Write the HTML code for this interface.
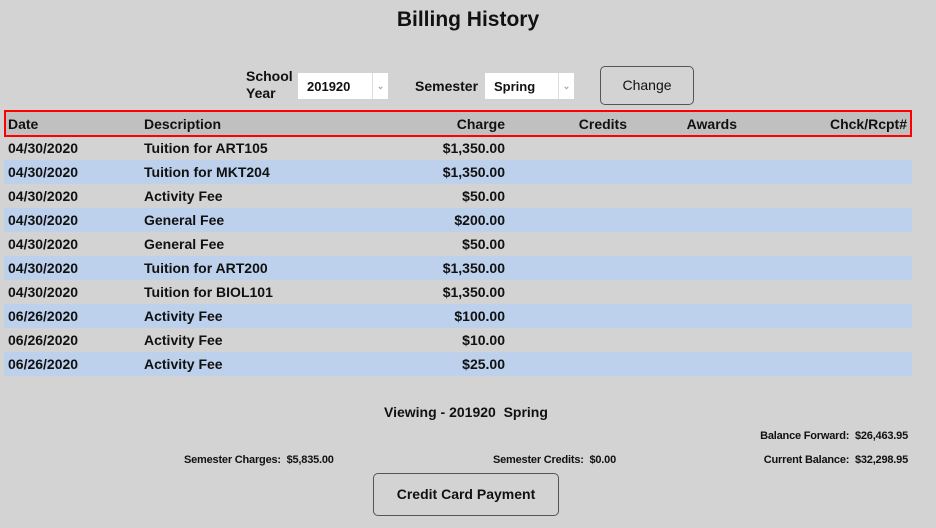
<!DOCTYPE html>
<html><head><style>
body{margin:0;width:936px;height:528px;background:#d3d3d3;font-family:"Liberation Sans",sans-serif;font-weight:bold;color:#111;position:relative;overflow:hidden}
.a{position:absolute;white-space:nowrap}
h1{position:absolute;top:8px;left:0;width:936px;text-align:center;margin:0;font-size:21px;font-weight:bold}
.sel{position:absolute;background:#fff;height:26px;font-size:13px;line-height:28px;padding-left:9px;box-sizing:border-box}
.sel .dd{position:absolute;right:0;top:0;width:15px;height:26px;border-left:1px solid #ddd;color:#aaa;font-size:9px;text-align:center;line-height:26px}
.btn{position:absolute;border:1px solid #555;border-radius:5px;box-sizing:border-box;text-align:center;font-size:14px}
.hdr{position:absolute;left:4px;top:110px;width:908px;height:27px;box-sizing:border-box;border:2px solid #f00;background:#c0c0c0}
.row{position:absolute;left:4px;width:908px;height:24px;font-size:14px;line-height:24px}
.row span{position:absolute}
.b{background:#bdd1ec}
.d{left:4px}.ds{left:140px}.c{right:407px}
.s{font-size:11px;letter-spacing:-0.2px}
</style></head><body>
<h1>Billing History</h1>
<div class="a" style="left:246px;top:68px;font-size:14px;line-height:17px">School<br>Year</div>
<div class="sel" style="left:298px;top:73px;width:90px">201920<div class="dd">&#8964;</div></div>
<div class="a" style="left:415px;top:78px;font-size:14px">Semester</div>
<div class="sel" style="left:485px;top:73px;width:89px">Spring<div class="dd">&#8964;</div></div>
<div class="btn" style="left:600px;top:66px;width:94px;height:39px;line-height:37px;font-weight:normal;">Change</div>
<div class="hdr"></div>
<div class="row" style="top:112px;font-size:14px"><span class="d">Date</span><span class="ds">Description</span><span class="c">Charge</span><span style="right:285px">Credits</span><span style="right:175px">Awards</span><span style="right:5px">Chck/Rcpt#</span></div>
<div class="row" style="top:136px"><span class="d">04/30/2020</span><span class="ds">Tuition for ART105</span><span class="c">$1,350.00</span></div>
<div class="row b" style="top:160px"><span class="d">04/30/2020</span><span class="ds">Tuition for MKT204</span><span class="c">$1,350.00</span></div>
<div class="row" style="top:184px"><span class="d">04/30/2020</span><span class="ds">Activity Fee</span><span class="c">$50.00</span></div>
<div class="row b" style="top:208px"><span class="d">04/30/2020</span><span class="ds">General Fee</span><span class="c">$200.00</span></div>
<div class="row" style="top:232px"><span class="d">04/30/2020</span><span class="ds">General Fee</span><span class="c">$50.00</span></div>
<div class="row b" style="top:256px"><span class="d">04/30/2020</span><span class="ds">Tuition for ART200</span><span class="c">$1,350.00</span></div>
<div class="row" style="top:280px"><span class="d">04/30/2020</span><span class="ds">Tuition for BIOL101</span><span class="c">$1,350.00</span></div>
<div class="row b" style="top:304px"><span class="d">06/26/2020</span><span class="ds">Activity Fee</span><span class="c">$100.00</span></div>
<div class="row" style="top:328px"><span class="d">06/26/2020</span><span class="ds">Activity Fee</span><span class="c">$10.00</span></div>
<div class="row b" style="top:352px"><span class="d">06/26/2020</span><span class="ds">Activity Fee</span><span class="c">$25.00</span></div>
<div class="a" style="left:384px;top:404px;font-size:14px">Viewing - 201920&nbsp; Spring</div>
<div class="a s" style="right:28px;top:430px">Balance Forward:&nbsp; $26,463.95</div>
<div class="a s" style="left:184px;top:454px">Semester Charges:&nbsp; $5,835.00</div>
<div class="a s" style="left:493px;top:454px">Semester Credits:&nbsp; $0.00</div>
<div class="a s" style="right:28px;top:454px">Current Balance:&nbsp; $32,298.95</div>
<div class="btn" style="left:373px;top:473px;width:186px;height:43px;line-height:41px">Credit Card Payment</div>
</body></html>
